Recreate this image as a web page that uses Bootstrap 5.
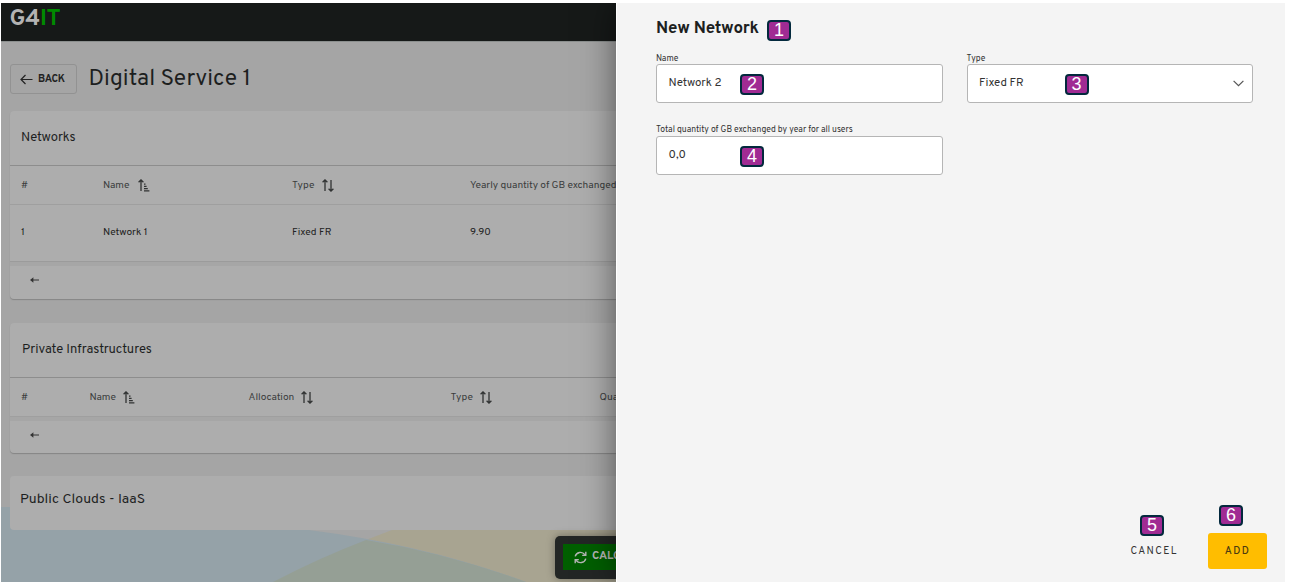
<!DOCTYPE html>
<html lang="en">
<head>
<meta charset="utf-8">
<title>G4IT - Digital Service 1</title>
<link href="https://cdn.jsdelivr.net/npm/bootstrap@5.3.0/dist/css/bootstrap.min.css" rel="stylesheet">
<style>
body{font-family:Overpass,Roboto,"Liberation Sans",sans-serif;color:#1d1f1f;background:#fff;width:1291px;height:586px;overflow:hidden;line-height:1}
.app-frame{width:1284px;height:579px;margin:3px 0 0 1px}
.page-side{width:615px;background:#a5a5a5}
.top-bar{height:38px;background:#161918;padding:4px 0 0 8.5px}
.brand{font-size:23.5px;font-weight:700;color:#b3b3b3;letter-spacing:-.3px;line-height:24px}
.brand span{color:#008a00}
.title-row{height:70px;padding:0 0 0 8.5px;box-shadow:inset 0 1px #8b8f8e}
.back-btn{width:67px;height:30px;border:1px solid #929292;border-radius:3px;font-size:10.3px;font-weight:700;letter-spacing:-.15px;color:#222;margin-top:6px;background:none;padding:0 1px 0 0;gap:5px}
.back-btn span{padding-top:2px}
.page-title{font-size:22.8px;font-weight:400;letter-spacing:.05px;margin:7px 0 0 12px}
.block-card{margin-left:9px;background:#adadad;border-radius:4px 0 0 4px;position:relative}
.block-card.open{box-shadow:0 1px 1px #858585}
.block-head{height:55px;padding-left:12px;font-size:13px;border-bottom:1px solid #8d8d8d}
.block-head.networks{padding-top:1px;letter-spacing:-.05px;padding-left:11px}
.block-head.clouds{height:54px;padding:0 0 7px 10px;font-size:14px;letter-spacing:.08px}
.grid-head{height:39px;font-size:10.2px;letter-spacing:-.02px;color:#3b3d3d;border-bottom:1px solid #9f9f9f;white-space:nowrap}
.grid-head>span{padding-top:2px}
.grid-head svg{margin-bottom:1px}
.net-cols.grid-head>span:last-child{letter-spacing:-.05px}
.grid-line{height:57px;font-size:10.2px;letter-spacing:-.02px;color:#222;border-bottom:1px solid #9b9b9b}
.grid-head,.grid-line{display:grid;align-items:center;padding-left:12px}
.grid-head>:first-child,.grid-line>:first-child{margin-left:-1px}
.net-cols{grid-template-columns:81px 189px 178px 1fr}
.infra-cols{grid-template-columns:67.5px 159px 202px 149px 1fr}
.infra-cols svg{margin-left:-1px}
.pager{height:37px;border-top:4px solid #a6a6a6;padding:0 0 5px 20px}
.pager.compact{height:36px;padding-bottom:4px}
.art{left:0;bottom:0;z-index:0}
.calc-bar{left:554px;top:533px;width:90px;height:43px;background:#232625;border-radius:5px;padding:8px;box-shadow:0 0 9px rgba(0,0,0,.35)}
.calc-btn{background:#005f00;height:26px;width:80px;color:#b5b5b5;font-size:11.5px;font-weight:700;letter-spacing:-.2px;padding-left:11px;gap:5px}
.calc-btn svg{flex:none}
.drawer{width:669px;background:#f4f4f4;border-left:1px solid #fff;box-shadow:0 0 32px rgba(0,0,0,.5);padding:0 32px 0 39px;z-index:3}
.drawer-title{font-size:17px;font-weight:700;letter-spacing:-.22px;height:49px;padding-top:16px}
.num{width:24px;height:21px;border:2px solid #03293d;border-radius:4px;background:#a02b93;color:#fff;font:18px/16px "Liberation Sans",sans-serif;display:block;text-align:center;position:absolute}
.field-label{font-size:8.6px;height:12px;padding-top:2.6px;color:#333}
.form-control.field{height:39px;width:286.5px;border:1px solid #b5b5b5;border-radius:3px;padding:0 8px 0 11.5px;font-size:11.5px;color:#333;background:#fff;line-height:1}
.fields{display:grid;grid-template-columns:286.5px 286.5px;column-gap:24px;row-gap:20.5px}
.fields .field.qty{padding-top:2px}
.act{font-size:10.3px;letter-spacing:1.4px;border:0;padding:3px 0 0;line-height:1}
.act-cancel{width:48px;color:#333;background:none;height:35px;padding-left:1px}
.act-add{width:59px;height:35.5px;background:#ffbd00;color:#4a3a10;border-radius:3px;font-weight:500}
.foot{margin:auto -14px 13.5px 0;gap:30.5px}
</style>
</head>
<body>
<div class="app-frame d-flex position-relative overflow-hidden">
  <main class="page-side position-relative flex-shrink-0">
    <svg class="art position-absolute" width="615" height="75" viewBox="0 0 615 75"><path d="M391 23Q331 45 272 75H615V23Z" fill="#a8a491"/><path d="M0 0H240V23H308Q425 38 525 75H0Z" fill="#95a2a8"/><path d="M365 33Q318 51 272 75H525Q445 46 365 33Z" fill="#959f95"/></svg>
    <header class="top-bar"><div class="brand">G4<span>IT</span></div></header>
    <div class="title-row d-flex align-items-center">
      <button class="back-btn d-flex align-items-center justify-content-center" type="button"><svg width="13" height="11" viewBox="0 0 13 11" fill="none" stroke="#222" stroke-width="1.2"><path d="M12.5 5.5H1.2M5.5 1 1 5.5 5.5 10"/></svg><span>BACK</span></button>
      <h1 class="page-title">Digital Service 1</h1>
    </div>
    <section class="block-card open">
      <div class="block-head networks d-flex align-items-center">Networks</div>
      <div class="grid-head net-cols"><span>#</span><span class="d-flex align-items-center gap-2">Name <svg width="12" height="13" viewBox="0 0 12 13" fill="none" stroke="#303232" stroke-width="1.3"><path d="M3 12V1M.6 3.2 3 .9 5.4 3.2M6 5.2H7.5M6 7.4H8.6M6 9.6H9.8M6 11.8H11.4"/></svg></span><span class="d-flex align-items-center gap-2">Type <svg width="12" height="13" viewBox="0 0 12 13" fill="none" stroke="#303232" stroke-width="1.3"><path d="M3 12V1M.6 3.2 3 .9 5.4 3.2M9 1V12M6.6 9.8 9 12.1 11.4 9.8"/></svg></span><span>Yearly quantity of GB exchanged</span></div>
      <div class="grid-line net-cols"><span>1</span><span>Network 1</span><span>Fixed FR</span><span>9.90</span></div>
      <div class="pager d-flex align-items-center"><svg width="9" height="6" viewBox="0 0 9 6"><path d="M0 3 3.4.3V5.7Z" fill="#333"/><path d="M2 3H9" stroke="#333"/></svg></div>
    </section>
    <section class="block-card open mt-4">
      <div class="block-head d-flex align-items-center">Private Infrastructures</div>
      <div class="grid-head infra-cols"><span>#</span><span class="d-flex align-items-center gap-2">Name <svg width="12" height="13" viewBox="0 0 12 13" fill="none" stroke="#303232" stroke-width="1.3"><path d="M3 12V1M.6 3.2 3 .9 5.4 3.2M6 5.2H7.5M6 7.4H8.6M6 9.6H9.8M6 11.8H11.4"/></svg></span><span class="d-flex align-items-center gap-2">Allocation <svg width="12" height="13" viewBox="0 0 12 13" fill="none" stroke="#303232" stroke-width="1.3"><path d="M3 12V1M.6 3.2 3 .9 5.4 3.2M9 1V12M6.6 9.8 9 12.1 11.4 9.8"/></svg></span><span class="d-flex align-items-center gap-2">Type <svg width="12" height="13" viewBox="0 0 12 13" fill="none" stroke="#303232" stroke-width="1.3"><path d="M3 12V1M.6 3.2 3 .9 5.4 3.2M9 1V12M6.6 9.8 9 12.1 11.4 9.8"/></svg></span><span>Quantity</span></div>
      <div class="pager compact d-flex align-items-center"><svg width="9" height="6" viewBox="0 0 9 6"><path d="M0 3 3.4.3V5.7Z" fill="#333"/><path d="M2 3H9" stroke="#333"/></svg></div>
    </section>
    <section class="block-card" style="margin-top:23px">
      <div class="block-head clouds d-flex align-items-center border-0">Public Clouds - IaaS</div>
    </section>
    <div class="calc-bar position-absolute"><div class="calc-btn d-flex align-items-center"><svg width="13" height="13" viewBox="0 0 13 13" fill="none" stroke="#b5b5b5" stroke-width="1.4"><path d="M1.2 5.4A5.4 5.4 0 0 1 10.8 3.6M11.8.8V4.4H8.2M11.8 7.6A5.4 5.4 0 0 1 2.2 9.4M1.2 12.2V8.6H4.8"/></svg><span>CALCULATE</span></div></div>
  </main>
  <aside class="drawer d-flex flex-column position-relative flex-shrink-0">
    <h2 class="drawer-title m-0">New Network</h2>
    <div class="fields">
      <div class="position-relative"><div class="field-label">Name</div><div class="form-control field d-flex align-items-center">Network 2</div><span class="num" style="left:84px;top:22px">2</span></div>
      <div class="position-relative"><div class="field-label">Type</div><div class="form-control field d-flex align-items-center justify-content-between">Fixed FR<svg width="11" height="7" viewBox="0 0 11 7" fill="none" stroke="#555" stroke-width="1.2"><path d="M.6.8 5.5 5.7 10.4.8"/></svg></div><span class="num" style="left:98px;top:22px">3</span></div>
      <div class="position-relative"><div class="field-label text-nowrap">Total quantity of GB exchanged by year for all users</div><div class="form-control field qty d-flex align-items-center">0,0</div><span class="num" style="left:84px;top:22.5px">4</span></div>
    </div>
    <span class="num" style="left:150px;top:17px">1</span>
    <div class="foot d-flex justify-content-end">
      <button class="act act-cancel" type="button">CANCEL</button>
      <button class="act act-add" type="button">ADD</button>
    </div>
    <span class="num" style="left:523px;top:512px">5</span>
    <span class="num" style="left:602px;top:502px">6</span>
  </aside>
</div>
<script src="https://cdn.jsdelivr.net/npm/bootstrap@5.3.0/dist/js/bootstrap.bundle.min.js"></script>
</body>
</html>
